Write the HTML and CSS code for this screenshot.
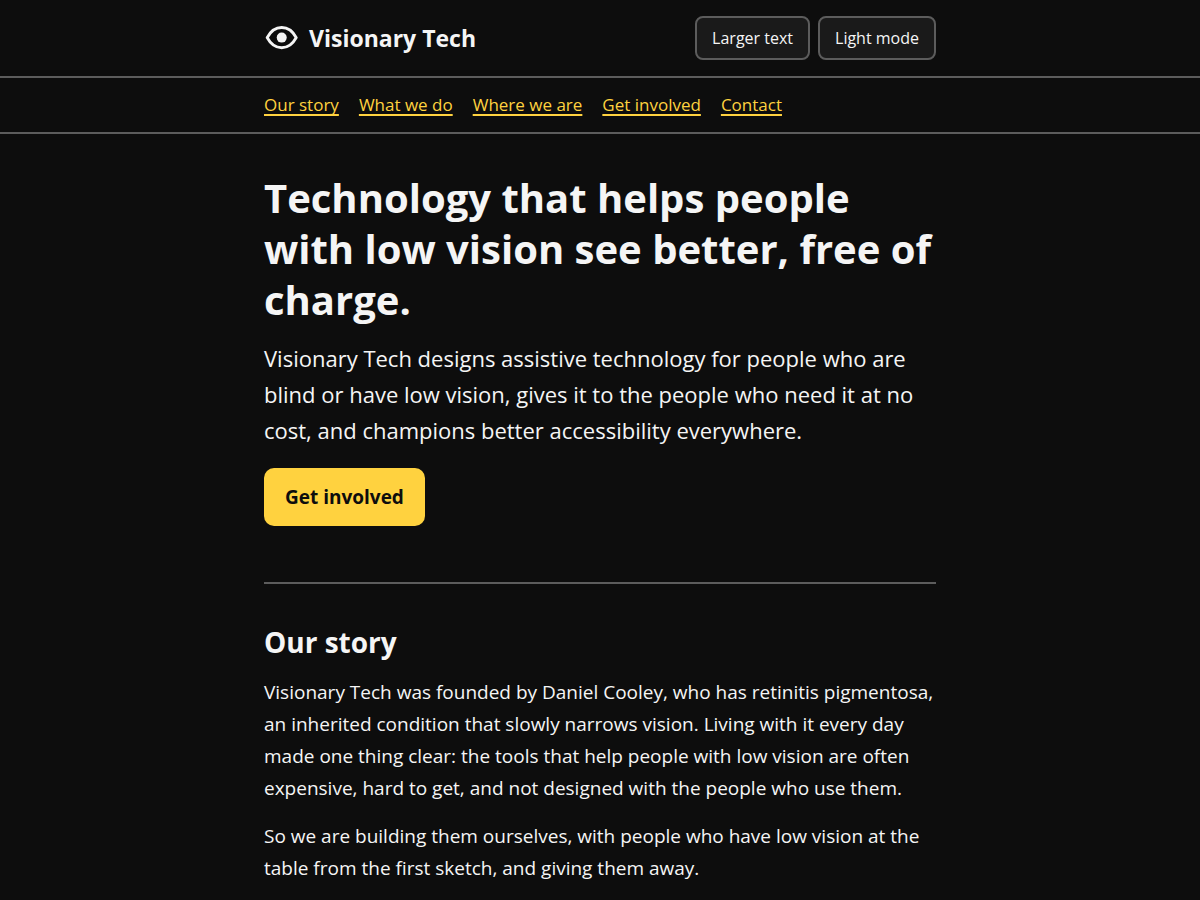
FILE: index.html
```html
<!DOCTYPE html>
<html lang="en">
<head>
    <meta charset="UTF-8">
    <meta name="viewport" content="width=device-width, initial-scale=1.0">
    <title>Visionary Tech</title>
    <link rel="stylesheet" href="styles.css">
</head>
<body>
    <header class="site-header">
        <div class="wrap header-row">
            <a class="brand" href="#top">
                <svg class="brand-mark" viewBox="0 0 36 36" aria-hidden="true">
                    <path d="M3.2 17.6 C7 10.5 12 7.5 17.7 7.5 S28.4 10.5 32.2 17.6 C28.4 24.7 23.4 27.7 17.7 27.7 S7 24.7 3.2 17.6 Z" fill="none" stroke="currentColor" stroke-width="3" stroke-linejoin="round"/>
                    <circle cx="17.7" cy="17.6" r="5" fill="currentColor"/>
                </svg>
                <span>Visionary Tech</span>
            </a>
            <div class="controls">
                <button type="button" class="control">Larger text</button>
                <button type="button" class="control">Light mode</button>
            </div>
        </div>
    </header>

    <nav class="site-nav" aria-label="Main">
        <ul class="wrap nav-list">
            <li><a href="#story">Our story</a></li>
            <li><a href="#what">What we do</a></li>
            <li><a href="#where">Where we are</a></li>
            <li><a href="#involved">Get involved</a></li>
            <li><a href="#contact">Contact</a></li>
        </ul>
    </nav>

    <main class="wrap" id="top">
        <section class="hero">
            <h1>Technology that helps people with low vision see better, free of charge.</h1>
            <p class="lead">Visionary Tech designs assistive technology for people who are blind or have low vision, gives it to the people who need it at no cost, and champions better accessibility everywhere.</p>
            <a class="cta" href="#involved">Get involved</a>
        </section>

        <section class="story" id="story">
            <h2>Our story</h2>
            <p>Visionary Tech was founded by Daniel Cooley, who has retinitis pigmentosa, an inherited condition that slowly narrows vision. Living with it every day made one thing clear: the tools that help people with low vision are often expensive, hard to get, and not designed with the people who use them.</p>
            <p>So we are building them ourselves, with people who have low vision at the table from the first sketch, and giving them away.</p>
        </section>
    </main>
</body>
</html>
```
FILE: styles.css
```css
:root {
    --bg: #0d0d0d;
    --panel: #1a1a1a;
    --text: #f5f5f5;
    --line: #5c5c5c;
    --accent: #ffd23f;
}
* {
    box-sizing: border-box;
}
body {
    margin: 0;
    background: var(--bg);
    color: var(--text);
    font-family: "Open Sans", "Noto Sans", sans-serif;
    font-size: 19px;
    line-height: 32px;
}
.wrap {
    max-width: 712px;
    margin: 0 auto;
    padding: 0 20px;
}

/* Header */
.site-header {
    padding: 16px 0;
    border-bottom: 2px solid var(--line);
}
.header-row {
    display: flex;
    flex-wrap: wrap;
    align-items: center;
    justify-content: space-between;
    gap: 12px;
}
.brand {
    display: flex;
    align-items: center;
    gap: 9px;
    color: var(--text);
    font-size: 23px;
    font-weight: 700;
    text-decoration: none;
}
.brand-mark {
    width: 36px;
    height: 36px;
}
.controls {
    display: flex;
    gap: 8px;
}
.control {
    min-height: 44px;
    padding: 0 15px;
    background: var(--panel);
    color: var(--text);
    border: 2px solid var(--line);
    border-radius: 8px;
    font-family: inherit;
    font-size: 16px;
    cursor: pointer;
}

/* Navigation */
.site-nav {
    border-bottom: 2px solid var(--line);
}
.nav-list {
    display: flex;
    flex-wrap: wrap;
    gap: 0 20px;
    padding-top: 11px;
    padding-bottom: 11px;
    list-style: none;
    font-size: 17px;
}
.nav-list a {
    color: var(--accent);
    text-decoration-thickness: 2px;
    text-underline-offset: 3px;
    text-decoration-skip-ink: none;
}

/* Hero */
.hero {
    padding: 38px 0 56px;
    border-bottom: 2px solid var(--line);
}
h1 {
    margin: 0 0 15px;
    font-size: 40px;
    line-height: 51px;
}
.lead {
    margin: 0 0 20px;
    font-size: 22px;
    line-height: 36px;
}
.cta {
    display: inline-block;
    padding: 13px 21px;
    background: var(--accent);
    color: var(--bg);
    border-radius: 10px;
    font-weight: 700;
    text-decoration: none;
    vertical-align: top;
}

/* Sections */
.story {
    padding: 40px 0;
}
h2 {
    margin: 0 0 15px;
    font-size: 28px;
    line-height: 37px;
}
.story p {
    margin: 0 0 16px;
}
```
